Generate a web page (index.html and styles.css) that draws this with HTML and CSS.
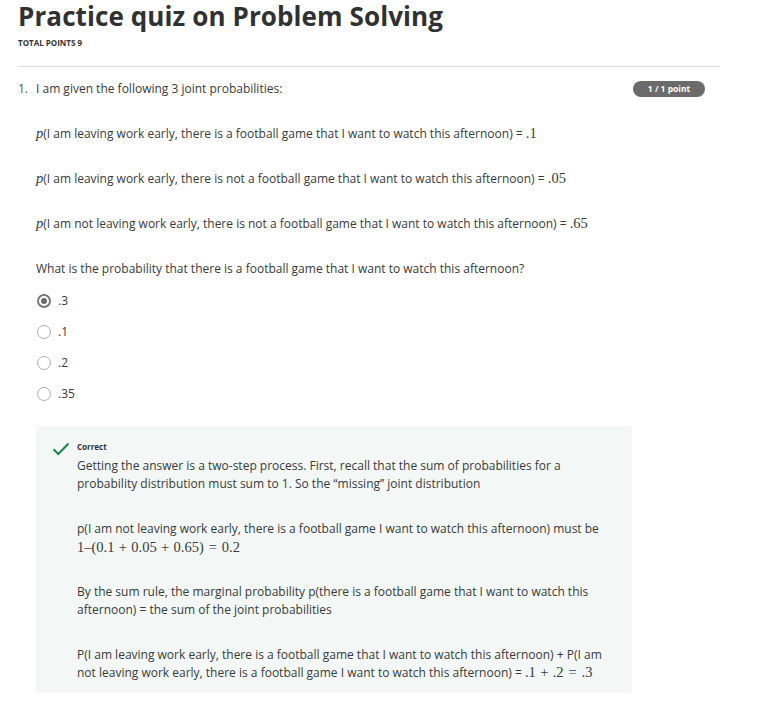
FILE: index.html
```html
<!DOCTYPE html>
<html>
<head>
<meta charset="utf-8">
<link rel="stylesheet" href="styles.css">
</head>
<body>
<div class="page">
  <h1 class="title">Practice quiz on Problem Solving</h1>
  <div class="total">TOTAL POINTS 9</div>
  <div class="rule"></div>
  <div class="question">
    <div class="qhead">
      <span class="qnum">1.</span>
      <span class="qtext">I am given the following 3 joint probabilities:</span>
      <span class="badge">1 / 1 point</span>
    </div>
    <div class="qbody">
      <p class="line"><span class="m mi">p</span>(I am leaving work early, there is a football game that I want to watch this afternoon) = <span class="m">.1</span></p>
      <p class="line"><span class="m mi">p</span>(I am leaving work early, there is not a football game that I want to watch this afternoon) = <span class="m">.05</span></p>
      <p class="line"><span class="m mi">p</span>(I am not leaving work early, there is not a football game that I want to watch this afternoon) = <span class="m">.65</span></p>
      <p class="line">What is the probability that there is a football game that I want to watch this afternoon?</p>
      <div class="options">
        <label class="opt"><span class="radio checked"></span><span>.3</span></label>
        <label class="opt"><span class="radio"></span><span>.1</span></label>
        <label class="opt"><span class="radio"></span><span>.2</span></label>
        <label class="opt"><span class="radio"></span><span>.35</span></label>
      </div>
      <div class="feedback">
        <svg class="check" width="18" height="14" viewBox="0 0 18 14"><path d="M1.5 7.2 L6.3 12 L16.5 1.5" fill="none" stroke="#1f8354" stroke-width="2"/></svg>
        <div class="fbody">
          <div class="correct">Correct</div>
          <p class="fp">Getting the answer is a two-step process. First, recall that the sum of probabilities for a probability distribution must sum to 1. So the “missing” joint distribution</p>
          <p class="fp">p(I am not leaving work early, there is a football game I want to watch this afternoon) must be <span class="m mblock">1–(0.1<span class="bin">+</span>0.05<span class="bin">+</span>0.65)<span class="rel">=</span>0.2</span></p>
          <p class="fp">By the sum rule, the marginal probability p(there is a football game that I want to watch this afternoon) = the sum of the joint probabilities</p>
          <p class="fp">P(I am leaving work early, there is a football game that I want to watch this afternoon) + P(I am not leaving work early, there is a football game I want to watch this afternoon) = <span class="m">.1<span class="bin">+</span>.2<span class="rel">=</span>.3</span></p>
        </div>
      </div>
    </div>
  </div>
</div>
</body>
</html>
```
FILE: styles.css
```css
html, body {
  margin: 0;
  padding: 0;
  background: #fff;
}
body {
  font-family: "Open Sans", "Liberation Sans", sans-serif;
  color: #373a3c;
}
.page {
  width: 702px;
  padding-left: 18px;
  padding-top: 1px;
}
.title {
  margin: 0;
  font-size: 26px;
  line-height: 31px;
  font-weight: 700;
  color: #2f3133;
  letter-spacing: 0.1px;
}
.total {
  margin-top: 6px;
  font-size: 8px;
  font-weight: 700;
  line-height: 10px;
  color: #333;
}
.rule {
  margin-top: 18px;
  height: 1px;
  background: #dcdcdc;
}
.question {
  font-size: 12px;
  line-height: 18px;
}
.qhead {
  display: flex;
  align-items: center;
  margin-top: 13px;
  padding-right: 15px;
}
.qnum {
  width: 18px;
  color: #555;
}
.qtext {
  flex: 1;
}
.badge {
  width: 72px;
  height: 16px;
  line-height: 16px;
  border-radius: 8px;
  background: #6b6b6b;
  color: #fff;
  font-size: 8.5px;
  font-weight: 700;
  text-align: center;
}
.qbody {
  padding-left: 18px;
}
.line {
  margin: 27px 0 0;
}
.m {
  font-family: "Liberation Serif", "DejaVu Serif", serif;
  font-size: 14.5px;
  line-height: 1;
}
.mi {
  font-style: italic;
}
.mblock {
  display: block;
  line-height: 18px;
}
.bin {
  padding: 0 0.3em;
}
.rel {
  padding: 0 0.34em;
}
.options {
  margin-top: 14px;
  display: flex;
  flex-direction: column;
  gap: 13px;
}
.opt {
  display: flex;
  align-items: center;
  gap: 7px;
  height: 18px;
  padding-left: 1px;
}
.radio {
  width: 14px;
  height: 14px;
  border: 1px solid #b0b0b0;
  border-radius: 50%;
  box-sizing: border-box;
  position: relative;
}
.radio.checked {
  border: 2px solid #777;
}
.radio.checked::after {
  content: "";
  position: absolute;
  left: 2px;
  top: 2px;
  width: 6px;
  height: 6px;
  border-radius: 50%;
  background: #6b6b6b;
}
.feedback {
  margin-top: 23px;
  width: 596px;
  box-sizing: border-box;
  background: #f3f8f6;
  display: flex;
  padding: 14px 20px 11px 16px;
  gap: 7px;
}
.check {
  margin-top: 2px;
  flex: none;
}
.fbody {
  flex: 1;
}
.correct {
  font-size: 8px;
  font-weight: 700;
  line-height: 14px;
  color: #333;
}
.fp {
  margin: 27px 0 0;
}
.correct + .fp {
  margin-top: 3px;
}
```
